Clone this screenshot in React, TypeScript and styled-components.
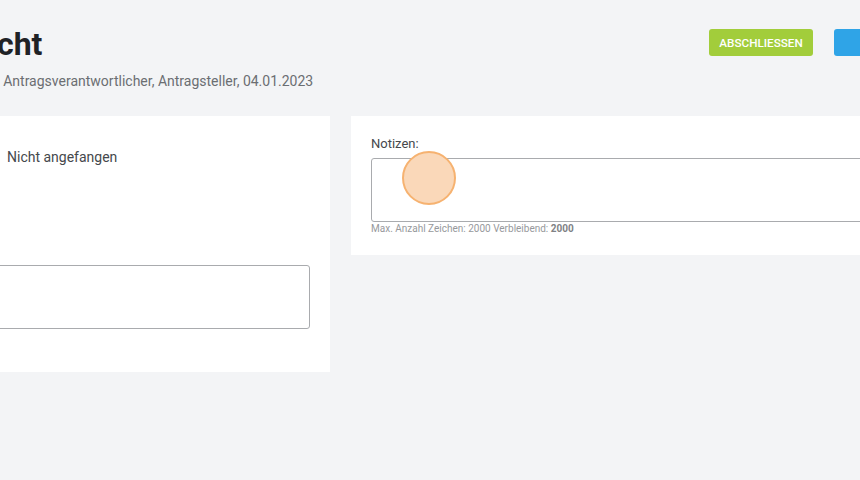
import styled, { createGlobalStyle } from 'styled-components'

const GlobalStyle = createGlobalStyle`
    html, body {
        margin: 0;
        padding: 0;
        background: #f3f4f6;
        overflow: hidden;
        font-family: Roboto, "Liberation Sans", sans-serif;
    }
`

const App = () => {
    return <>
        <GlobalStyle />
        <Page>
            <Header>
                <div className="titles">
                    <Title>Übersicht</Title>
                    <Subtitle>Monika Werner, Antragsverantwortlicher, Antragsteller, 04.01.2023</Subtitle>
                </div>
                <Actions>
                    <ActionButton $color="#a2cd3b">Abschliessen</ActionButton>
                    <ActionButton $color="#2fa4e7" $wide>Speichern</ActionButton>
                </Actions>
            </Header>
            <Cards>
                <Card $bottom={30}>
                    <StatusRow>
                        <span className="label">Status:</span>
                        <StatusIcon viewBox="0 0 16 16">
                            <circle cx="8" cy="8" r="7" fill="#2fa4e7" />
                        </StatusIcon>
                        <span className="value">Nicht angefangen</span>
                    </StatusRow>
                    <Field $top={75}>
                        <Label>Kommentar:</Label>
                        <TextArea />
                        <Counter>Max. Anzahl Zeichen: 2000 Verbleibend: <b>2000</b></Counter>
                    </Field>
                </Card>
                <Card $bottom={20}>
                    <Field>
                        <Label>Notizen:</Label>
                        <TextArea />
                        <Counter>Max. Anzahl Zeichen: 2000 Verbleibend: <b>2000</b></Counter>
                    </Field>
                </Card>
            </Cards>
        </Page>
        <Pointer />
    </>
}

export default App

const Page = styled.div`
    width: 1237px;
    margin-left: -263px;
    padding-top: 25px;
    display: flex;
    flex-direction: column;
`

const Header = styled.div`
    display: flex;
    justify-content: space-between;
    align-items: flex-start;
    padding-left: 167px;
    .titles {
        display: flex;
        flex-direction: column;
        gap: 8px;
    }
`

const Title = styled.h1`
    margin: 0;
    font-size: 32px;
    line-height: 38px;
    font-weight: 700;
    color: #1f2226;
`

const Subtitle = styled.div`
    font-size: 14px;
    line-height: 20px;
    color: #6b6e72;
`

const Actions = styled.div`
    display: flex;
    gap: 21px;
    margin-top: 4px;
`

const ActionButton = styled.button<{ $color: string; $wide?: boolean }>`
    height: 27px;
    width: ${p => p.$wide ? '140px' : '104px'};
    padding: 0;
    border: none;
    border-radius: 3px;
    background: ${p => p.$color};
    color: #fff;
    font-family: Roboto, "Liberation Sans", sans-serif;
    font-size: 11.7px;
    font-weight: 500;
    text-transform: uppercase;
`

const Cards = styled.div`
    display: grid;
    grid-template-columns: 593px 623px;
    gap: 21px;
    margin-top: 25px;
    align-items: start;
`

const Card = styled.div<{ $bottom: number }>`
    background: #fff;
    padding: 20px 20px ${p => p.$bottom}px;
    display: flex;
    flex-direction: column;
`

const StatusRow = styled.div`
    display: flex;
    align-items: center;
    margin-top: 10px;
    font-size: 14px;
    line-height: 20px;
    color: #45484c;
    .label {
        width: 228px;
        color: #45484c;
    }
    .value {
        margin-left: 6px;
    }
`

const StatusIcon = styled.svg`
    width: 16px;
    height: 16px;
    margin-top: 6px;
`

const Field = styled.div<{ $top?: number }>`
    display: flex;
    flex-direction: column;
    margin-top: ${p => p.$top ?? 0}px;
`

const Label = styled.label`
    font-size: 13px;
    line-height: 16px;
    color: #45484c;
    margin-bottom: 6px;
`

const TextArea = styled.textarea`
    height: 64px;
    box-sizing: border-box;
    border: 1px solid #a9abae;
    border-radius: 3px;
    resize: none;
    background: #fff;
`

const Counter = styled.div`
    margin-top: 1px;
    font-size: 10px;
    line-height: 12px;
    color: #97999c;
    b {
        color: #808285;
    }
`

const Pointer = styled.div`
    position: fixed;
    left: 402px;
    top: 151px;
    width: 54px;
    height: 54px;
    box-sizing: border-box;
    border-radius: 50%;
    background: #fad8b9;
    border: 2px solid #f6b270;
    pointer-events: none;
`
